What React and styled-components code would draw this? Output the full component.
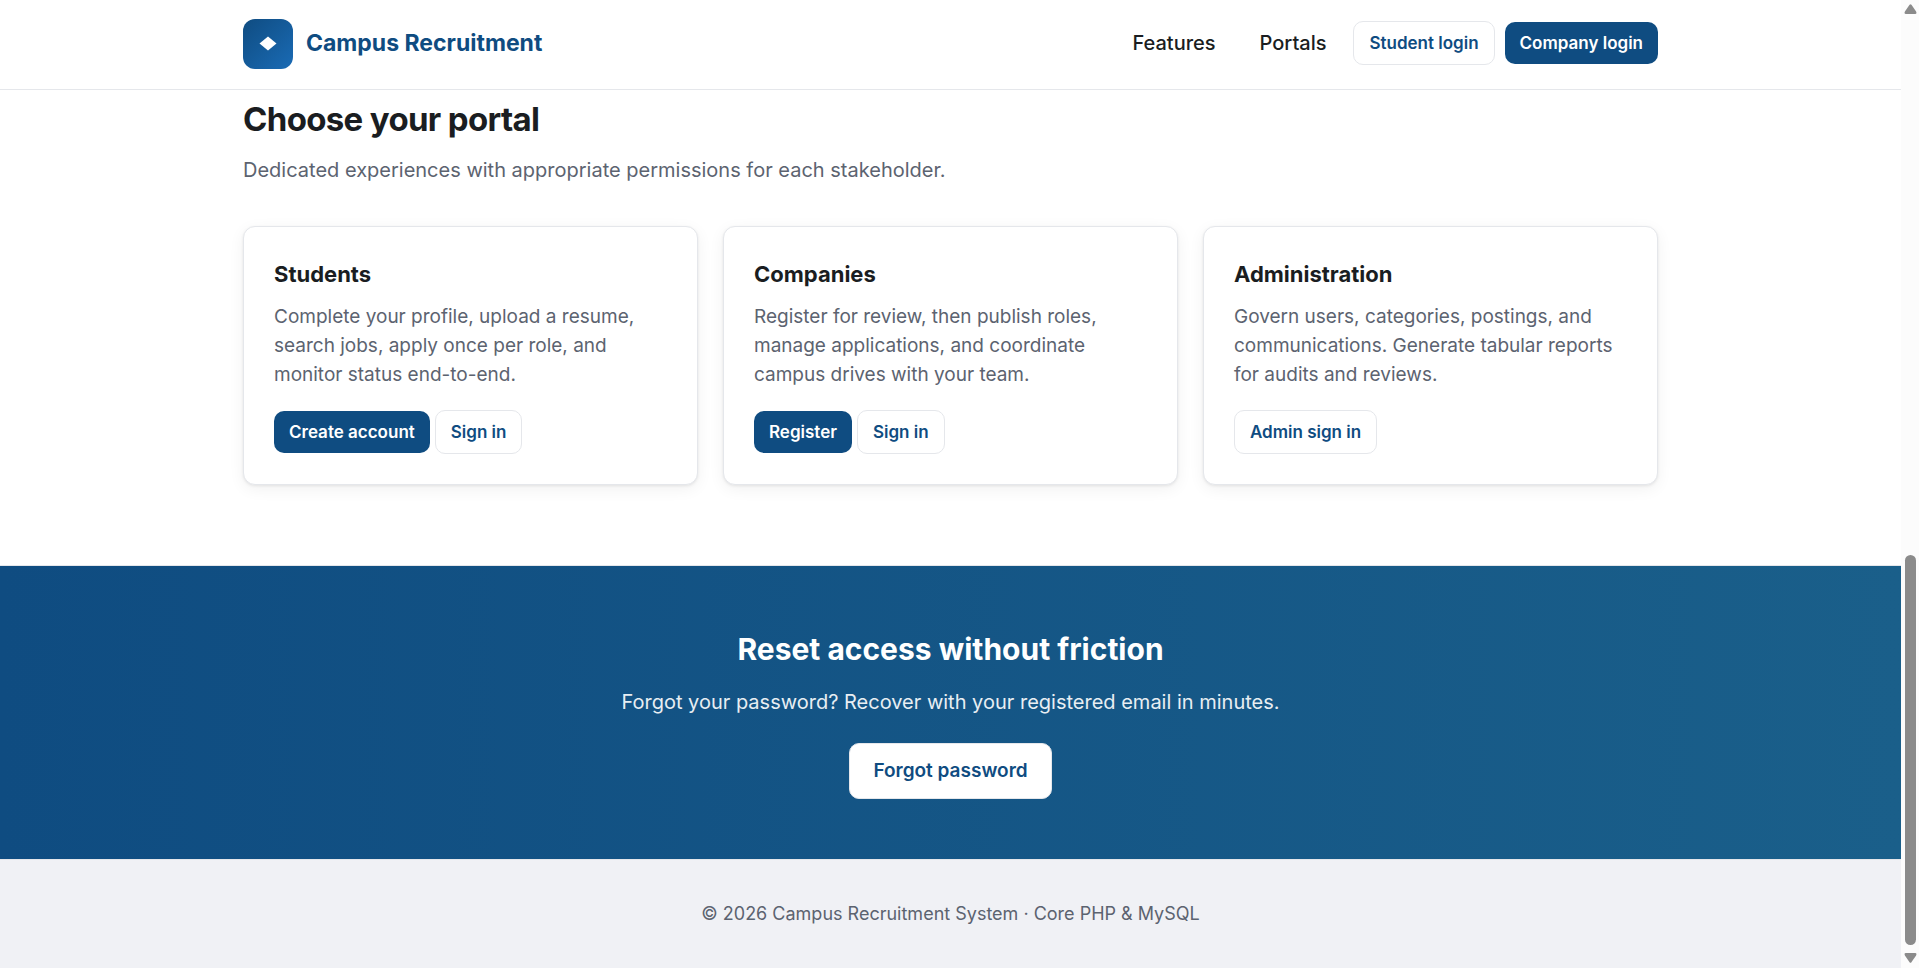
import React from 'react';
import styled, { createGlobalStyle, css } from 'styled-components';

const portals = [
  {
    title: 'Students',
    text: 'Complete your profile, upload a resume, search jobs, apply once per role, and monitor status end-to-end.',
    actions: [
      { label: 'Create account', primary: true },
      { label: 'Sign in' },
    ],
  },
  {
    title: 'Companies',
    text: 'Register for review, then publish roles, manage applications, and coordinate campus drives with your team.',
    actions: [
      { label: 'Register', primary: true },
      { label: 'Sign in' },
    ],
  },
  {
    title: 'Administration',
    text: 'Govern users, categories, postings, and communications. Generate tabular reports for audits and reviews.',
    actions: [{ label: 'Admin sign in' }],
  },
];

const App = () => {
  return (
    <>
      <GlobalStyle />
      <Window>
        <Page>
          <Header>
            <HeaderInner>
              <Brand href="#">
                <Logo>
                  <svg width="18" height="16" viewBox="0 0 18 16">
                    <path d="M9 0.5 L17.5 7.5 L9 14.5 L0.5 7.5 Z" fill="#fff" />
                  </svg>
                </Logo>
                <BrandName>Campus Recruitment</BrandName>
              </Brand>
              <Nav>
                <NavLink href="#features">Features</NavLink>
                <NavLink href="#portals">Portals</NavLink>
                <NavActions>
                  <Button>Student login</Button>
                  <Button $primary>Company login</Button>
                </NavActions>
              </Nav>
            </HeaderInner>
          </Header>

          <Portals id="portals">
            <SectionTitle>Choose your portal</SectionTitle>
            <Lead>Dedicated experiences with appropriate permissions for each stakeholder.</Lead>
            <CardGrid>
              {portals.map((portal) => (
                <Card key={portal.title}>
                  <CardTitle>{portal.title}</CardTitle>
                  <CardText>{portal.text}</CardText>
                  <CardActions>
                    {portal.actions.map((action) => (
                      <Button key={action.label} $primary={action.primary}>
                        {action.label}
                      </Button>
                    ))}
                  </CardActions>
                </Card>
              ))}
            </CardGrid>
          </Portals>

          <Cta>
            <CtaTitle>Reset access without friction</CtaTitle>
            <CtaText>Forgot your password? Recover with your registered email in minutes.</CtaText>
            <Button $large>Forgot password</Button>
          </Cta>

          <Footer>© 2026 Campus Recruitment System · Core PHP &amp; MySQL</Footer>
        </Page>

        <Scrollbar aria-hidden="true">
          <svg width="13" height="10" viewBox="0 0 14 10" preserveAspectRatio="none">
            <path d="M6 0.8 Q7 -0.2 8 0.8 L13 7.5 Q14.2 10 12 10 L2 10 Q-0.2 10 1 7.5 Z" fill="#8b8b8b" />
          </svg>
          <Track>
            <Thumb />
          </Track>
          <svg width="13" height="10" viewBox="0 0 14 10" preserveAspectRatio="none">
            <path d="M6 9.2 Q7 10.2 8 9.2 L13 2.5 Q14.2 0 12 0 L2 0 Q-0.2 0 1 2.5 Z" fill="#8b8b8b" />
          </svg>
        </Scrollbar>
      </Window>
    </>
  );
};

const GlobalStyle = createGlobalStyle`
  * {
    box-sizing: border-box;
  }

  body {
    margin: 0;
    font-family: Inter, 'Liberation Sans', sans-serif;
    color: #1a1d21;
    background: #fff;
  }
`;

const Window = styled.div`
  display: flex;
  min-height: 100vh;
`;

const Page = styled.div`
  flex: 1;
  min-width: 0;
  display: flex;
  flex-direction: column;
`;

const container = css`
  width: 100%;
  max-width: 1479px;
  margin: 0 auto;
  padding-left: 32px;
  padding-right: 32px;
`;

const Header = styled.header`
  background: #fff;
  border-bottom: 1px solid #e5e7eb;
`;

const HeaderInner = styled.div`
  ${container}
  display: flex;
  flex-wrap: wrap;
  align-items: center;
  justify-content: space-between;
  padding-top: 19px;
  padding-bottom: 20px;
`;

const Brand = styled.a`
  display: flex;
  align-items: center;
  gap: 13px;
  color: #0f4c81;
  text-decoration: none;
`;

const BrandName = styled.span`
  padding-bottom: 2px;
  font-size: 23px;
  font-weight: 700;
  line-height: 28px;
`;

const Logo = styled.span`
  display: flex;
  align-items: center;
  justify-content: center;
  width: 50px;
  height: 50px;
  border-radius: 12px;
  background: linear-gradient(135deg, #0f4c81, #1a6bb5);
`;

const Nav = styled.nav`
  display: flex;
  flex-wrap: wrap;
  align-items: center;
  padding-bottom: 2px;
`;

const NavLink = styled.a`
  margin-right: 44px;
  font-size: 20px;
  font-weight: 500;
  line-height: 24px;
  color: #1a1d21;
  text-decoration: none;
`;

const NavActions = styled.div`
  display: flex;
  align-items: center;
  gap: 10px;
  margin-left: -17px;
`;

const Button = styled.button`
  padding: 11px 15px;
  border: 1px solid #e5e7eb;
  border-radius: 10px;
  background: #fff;
  color: #0f4c81;
  font-family: inherit;
  font-size: 17px;
  font-weight: 600;
  line-height: 20px;
  cursor: pointer;

  ${({ $primary }) =>
    $primary &&
    css`
      border: 0;
      background: #0f4c81;
      color: #fff;
    `}

  ${({ $large }) =>
    $large &&
    css`
      padding: 15px 23px;
      font-size: 19px;
      line-height: 24px;
    `}
`;

const Portals = styled.section`
  ${container}
  padding-top: 9px;
  padding-bottom: 80px;
`;

const SectionTitle = styled.h2`
  margin: 0 0 15px;
  font-size: 33px;
  font-weight: 700;
  line-height: 40px;
  letter-spacing: -0.02em;
`;

const Lead = styled.p`
  margin: 0 0 40px;
  font-size: 20px;
  line-height: 32px;
  color: #5c6370;
`;

const CardGrid = styled.div`
  display: grid;
  grid-template-columns: repeat(auto-fit, minmax(340px, 1fr));
  gap: 25px;
`;

const Card = styled.article`
  padding: 30px;
  border: 1px solid #e5e7eb;
  border-radius: 12px;
  background: #fff;
  box-shadow: 0 1px 3px rgba(0, 0, 0, 0.08), 0 4px 16px rgba(0, 0, 0, 0.06);
`;

const CardTitle = styled.h3`
  margin: 0 0 11px;
  font-size: 22px;
  font-weight: 700;
  line-height: 34px;
`;

const CardText = styled.p`
  margin: 0 0 21px;
  font-size: 19px;
  line-height: 29px;
  color: #5c6370;
`;

const CardActions = styled.div`
  display: flex;
  flex-wrap: wrap;
  align-items: center;
  gap: 5px;
`;

const Cta = styled.section`
  display: flex;
  flex-direction: column;
  align-items: center;
  padding: 64px 32px 60px;
  border-top: 1px solid #e5e7eb;
  background: linear-gradient(90deg, #0f4c81, #1a5f8a);
  color: #fff;
  text-align: center;
`;

const CtaTitle = styled.h2`
  margin: 0 0 18px;
  font-size: 30px;
  font-weight: 700;
  line-height: 38px;
`;

const CtaText = styled.p`
  margin: 0 0 25px;
  font-size: 20px;
  line-height: 32px;
  opacity: 0.9;
`;

const Footer = styled.footer`
  flex: 1;
  padding: 40px 32px;
  border-top: 1px solid #e5e7eb;
  background: #f0f1f5;
  color: #5c6370;
  font-size: 18px;
  line-height: 28px;
  text-align: center;
`;

const Scrollbar = styled.div`
  display: flex;
  flex-direction: column;
  align-items: center;
  flex: 0 0 18px;
  padding: 4px 0 5px 1px;
  background: #fcfcfc;
`;

const Track = styled.div`
  flex: 1;
  display: flex;
  flex-direction: column;
  justify-content: flex-end;
  padding: 8px 0;
`;

const Thumb = styled.div`
  width: 11px;
  height: 390px;
  border-radius: 6px;
  background: #8b8b8b;
`;

export default App;
